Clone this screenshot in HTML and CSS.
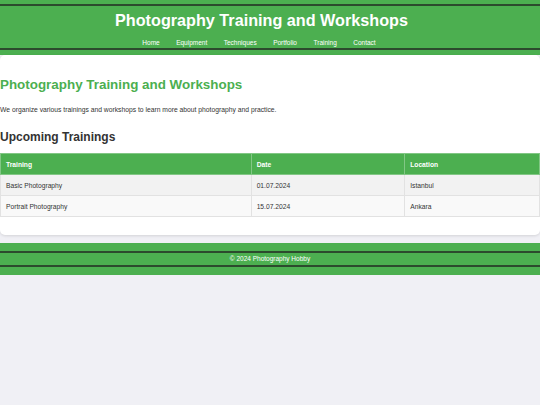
FILE: index.html
```html
<!DOCTYPE html>
<html lang="en">
<head>
<meta charset="utf-8">
<title>Photography Training and Workshops</title>
<link rel="stylesheet" href="styles.css">
</head>
<body>
<header class="site-header">
  <div class="header-inner">
    <h1 class="site-title">Photography Training and Workshops</h1>
    <nav class="nav">
      <a href="#">Home</a>
      <a href="#">Equipment</a>
      <a href="#">Techniques</a>
      <a href="#">Portfolio</a>
      <a href="#">Training</a>
      <a href="#">Contact</a>
    </nav>
  </div>
</header>
<main class="card">
  <h2 class="page-title">Photography Training and Workshops</h2>
  <p class="intro">We organize various trainings and workshops to learn more about photography and practice.</p>
  <h3 class="section-title">Upcoming Trainings</h3>
  <table class="trainings">
    <thead>
      <tr><th class="c1">Training</th><th class="c2">Date</th><th class="c3">Location</th></tr>
    </thead>
    <tbody>
      <tr><td>Basic Photography</td><td>01.07.2024</td><td>Istanbul</td></tr>
      <tr><td>Portrait Photography</td><td>15.07.2024</td><td>Ankara</td></tr>
    </tbody>
  </table>
</main>
<footer class="site-footer">
  <div class="footer-inner">© 2024 Photography Hobby</div>
</footer>
</body>
</html>
```
FILE: styles.css
```css
html, body {
  margin: 0;
  padding: 0;
}
body {
  background: #f0f0f5;
  font-family: "Liberation Sans", Arial, sans-serif;
  color: #333;
}
.site-header {
  background: #4caf50;
  padding: 4px 0 5px;
  color: #fff;
}
.header-inner {
  border-top: 2px solid #2c4a2d;
  border-bottom: 2px solid #2c4a2d;
  text-align: center;
}
.site-title {
  margin: 0;
  padding: 6px 17px 0 0;
  font-size: 16.2px;
  line-height: 16px;
  font-weight: bold;
}
.nav {
  display: flex;
  justify-content: center;
  gap: 16.5px;
  margin-top: 10px;
  padding: 0 22px 1px 0;
  font-size: 6.5px;
  line-height: 9px;
}
.nav a {
  color: #fff;
  text-decoration: none;
}
.card {
  display: block;
  background: #fff;
  border-radius: 5px;
  box-shadow: 0 1px 3px rgba(0, 0, 0, 0.12);
  padding: 22px 0 18px;
}
.page-title {
  margin: 0;
  color: #4caf50;
  font-size: 13.4px;
  line-height: 16px;
  font-weight: bold;
}
.intro {
  margin: 11.5px 0 0;
  font-size: 6.75px;
  line-height: 9px;
}
.section-title {
  margin: 16.5px 0 0;
  font-size: 12px;
  line-height: 14px;
  font-weight: bold;
  color: #333;
}
.trainings {
  margin-top: 9px;
  width: 100%;
  border-collapse: collapse;
  border: 1px solid #ddd;
  font-size: 6.7px;
}
.trainings th {
  background: #4caf50;
  color: #fff;
  font-weight: bold;
  text-align: left;
  height: 20px;
  padding: 0 5px;
  border: 1px solid #82c785;
}
.trainings .c1 { width: 46.5%; }
.trainings .c2 { width: 28.5%; }
.trainings .c3 { width: 25%; }
.trainings td {
  height: 20px;
  padding: 0 5px;
  border: 1px solid #e2e2e2;
  color: #333;
}
.trainings tbody tr:nth-child(1) td { background: #f2f2f2; }
.trainings tbody tr:nth-child(2) td { background: #f9f9f9; }
.site-footer {
  margin-top: 8px;
  background: #4caf50;
  padding: 8px 0;
  color: #fff;
}
.footer-inner {
  border-top: 2px solid #2c4a2d;
  border-bottom: 2px solid #2c4a2d;
  text-align: center;
  font-size: 6.5px;
  line-height: 11.5px;
}
```
